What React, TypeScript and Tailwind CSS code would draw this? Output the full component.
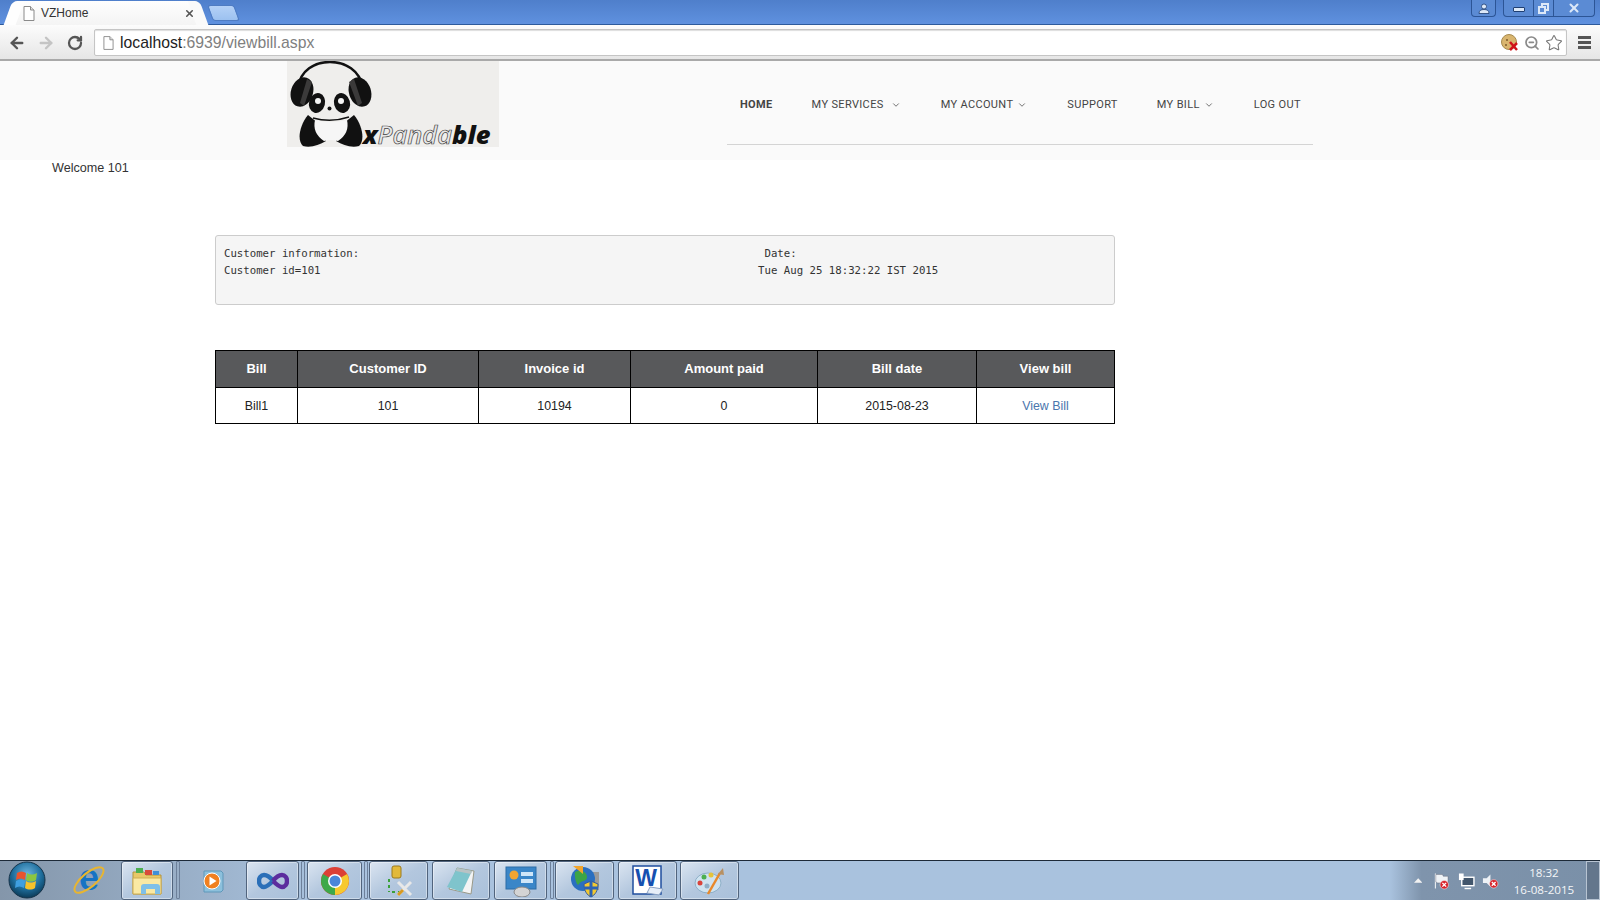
import { ArrowLeft, ArrowRight, ChevronDown, RotateCw, Star, X, ZoomOut } from "lucide-react";
import type { ReactNode } from "react";

const navItems = [
  { label: "HOME", active: true },
  { label: "MY SERVICES", menu: true, wide: true },
  { label: "MY ACCOUNT", menu: true },
  { label: "SUPPORT" },
  { label: "MY BILL", menu: true },
  { label: "LOG OUT" },
];

const columns = [
  { title: "Bill", width: "w-[82px]", value: "Bill1" },
  { title: "Customer ID", width: "w-[181px]", value: "101" },
  { title: "Invoice id", width: "w-[152px]", value: "10194" },
  { title: "Amount paid", width: "w-[187px]", value: "0" },
  { title: "Bill date", width: "w-[159px]", value: "2015-08-23" },
  { title: "View bill", width: "w-[138px]", value: "View Bill" },
];

const infoText =
  "Customer information:".padEnd(84) + "Date:\n" + "Customer id=101".padEnd(83) + "Tue Aug 25 18:32:22 IST 2015\n\n";

function PageIcon({ className }: { className?: string }) {
  return (
    <svg viewBox="0 0 12 15" className={className} fill="#fff" stroke="#8a8a8a">
      <path d="M1 .5h6.5L11 4v10.500H1z" />
      <path d="M7.500.5V4H11" fill="#ddd" />
    </svg>
  );
}

function NotOk({ x, y }: { x: number; y: number }) {
  return (
    <g>
      <circle cx={x} cy={y} r="4.500" fill="#d8232a" stroke="#fff" strokeWidth=".5" />
      <path d={`M${x - 2} ${y - 2}l4 4m0-4l-4 4`} stroke="#fff" strokeWidth="1.500" />
    </g>
  );
}

function PandaLogo() {
  return (
    <svg viewBox="0 0 212 86" className="h-[86px] w-[212px] bg-[#efeeec]">
      <path d="M11 27C13 9 28 1 43 1s30 8 33 26" fill="none" stroke="#111" strokeWidth="2.500" />
      <ellipse cx="15" cy="31" rx="11" ry="15" fill="#111" transform="rotate(18 15 31)" />
      <ellipse cx="73" cy="31" rx="11" ry="15" fill="#111" transform="rotate(-18 73 31)" />
      <path d="M20 18l5 3-8 24-4-3z" fill="#3b3a3a" />
      <path d="M67 18l-5 3 9 24 4-3z" fill="#3b3a3a" />
      <ellipse cx="30" cy="42" rx="8" ry="10" fill="#111" transform="rotate(15 30 42)" />
      <ellipse cx="55" cy="42" rx="8" ry="10" fill="#111" transform="rotate(-15 55 42)" />
      <circle cx="31" cy="40" r="3" fill="#f4f4f4" />
      <circle cx="54" cy="40" r="3" fill="#f4f4f4" />
      <circle cx="42.500" cy="47.500" r="2" fill="#111" />
      <path d="M21 54C12 65 10 80 16 85c8 2 16-1 23-5l-8-18z" fill="#111" />
      <path d="M67 54c9 11 11 26 5 31-8 2-16-1-23-5l8-18z" fill="#111" />
      <path d="M26 57q18 5 36-1" fill="none" stroke="#111" strokeWidth="1.500" />
      <path d="M28 59q16 4 32 0 3 13-9 21-7-2-14 0-12-8-9-21z" fill="#f6f6f6" />
      <text y="83" x="76" fontFamily="'Open Sans', sans-serif" fontStyle="italic" fontWeight="800" fontSize="25.500">
        <tspan fill="#111">x</tspan>
        <tspan fill="#e8e8e8" stroke="#444" strokeWidth=".7" fontWeight="600">Panda</tspan>
        <tspan fill="#111">ble</tspan>
      </text>
    </svg>
  );
}

function BrowserChrome() {
  return (
    <>
      <div className="flex h-[25px] shrink-0 border-b border-[#2d5a9c] bg-gradient-to-b from-[#4f7fcb] to-[#5f91df]">
        <div className="relative ml-[14px] mt-[1px] flex h-[24px] w-[185px] items-center rounded-t-[6px] bg-gradient-to-b from-[#fefefe] to-[#f4f4f4] pl-[9px]">
          <div className="absolute bottom-0 left-[-6px] top-0 w-[12px] -skew-x-[20deg] rounded-tl-[5px] bg-[#fefefe]" />
          <div className="absolute bottom-0 right-[-5px] top-0 w-[12px] skew-x-[20deg] rounded-tr-[5px] bg-[#fafafa]" />
          <PageIcon className="relative h-[15px] w-[12px]" />
          <span className="relative ml-[6px] font-['Liberation_Sans',sans-serif] text-[12px] text-[#333]">VZHome</span>
          <X size={11} strokeWidth={3.5} className="absolute right-[4px] top-[7px] text-[#555]" />
        </div>
        <div className="ml-[11px] mt-[5px] h-[16px] w-[27px] skew-x-[20deg] rounded-[3px] border border-[#4f7cc2] bg-gradient-to-b from-[#b4d1f7] to-[#9cc1f0]" />
        <div className="ml-auto mr-[5px] flex h-[16px] items-start">
          <div className="flex h-[17px] w-[25px] items-center justify-center rounded-b-[4px] border border-t-0 border-[#2c5596] bg-[#5b8bd4]">
            <svg viewBox="0 0 12 11" className="h-[11px] w-[12px]" fill="#dce8f8" stroke="#1f3f72" strokeWidth=".8">
              <circle cx="6" cy="3.500" r="2.500" />
              <path d="M1 10.500c0-3 2-4 5-4s5 1 5 4z" />
            </svg>
          </div>
          <div className="ml-[7px] flex h-[17px] items-center rounded-b-[4px] border border-t-0 border-[#2c5596] bg-[#5b8bd4]">
            <div className="flex h-full w-[30px] items-center justify-center border-r border-[#2c5596] pt-[3px]">
              <div className="h-[5px] w-[12px] rounded-[1px] border border-[#1f3f72] bg-[#dce8f8]" />
            </div>
            <div className="flex h-full w-[20px] items-center justify-center border-r border-[#2c5596]">
              <div className="relative h-[11px] w-[11px]">
                <div className="absolute right-0 top-0 h-[8px] w-[8px] border-2 border-[#dce8f8]" />
                <div className="absolute bottom-0 left-0 h-[8px] w-[8px] border-2 border-[#dce8f8] bg-[#5b8bd4]" />
              </div>
            </div>
            <div className="flex h-full w-[40px] items-center justify-center">
              <X size={14} strokeWidth={3.5} className="text-[#dce8f8]" />
            </div>
          </div>
        </div>
      </div>
      <div className="flex h-[36px] shrink-0 items-center border-b-2 border-[#a9a9a9] bg-gradient-to-b from-[#fcfcfc] to-[#e6e6e6] pt-[1px]">
        <ArrowLeft size={18} strokeWidth={3.2} className="ml-[8px] text-[#555]" />
        <ArrowRight size={18} strokeWidth={3.2} className="ml-[11px] text-[#c4c4c4]" />
        <RotateCw size={16} strokeWidth={3.4} className="ml-[12px] text-[#555]" />
        <div className="ml-[11px] flex h-[27px] w-[1473px] items-center rounded-[2px] border border-[#c5c5c5] bg-white pl-[8px] pr-[3px] shadow-[inset_0_1px_1px_#ddd]">
          <PageIcon className="h-[14px] w-[11px]" />
          <span className="ml-[6px] font-['Liberation_Sans',sans-serif] text-[15.75px] text-[#222]">
            localhost<span className="text-[#808080]">:6939/viewbill.aspx</span>
          </span>
          <svg viewBox="0 0 18 18" className="ml-auto h-[18px] w-[18px]">
            <circle cx="8" cy="8" r="7.500" fill="#d9b56f" stroke="#a68a4f" />
            <circle cx="6" cy="6" r="1" fill="#7b5b2a" />
            <circle cx="5" cy="11" r="1" fill="#7b5b2a" />
            <path d="M9 8l7 8m0-7l-7 7" stroke="#d0131a" strokeWidth="2.500" />
          </svg>
          <ZoomOut size={16} strokeWidth={2.6} className="ml-[5px] text-[#8a8a8a]" />
          <Star size={18} strokeWidth={1.4} className="ml-[5px] text-[#777]" />
        </div>
        <div className="ml-[11px] flex w-[13px] flex-col gap-[2px]">
          <div className="h-[3px] bg-[#555]" />
          <div className="h-[3px] bg-[#555]" />
          <div className="h-[3px] bg-[#555]" />
        </div>
      </div>
    </>
  );
}

function TaskButton({ width, gap, children }: { width: string; gap: string; children: ReactNode }) {
  return (
    <div className={`${width} ${gap} flex h-[39px] items-center justify-center rounded-[3px] border border-[#51647d] bg-gradient-to-br from-[#dbe5f1] via-[#b3c7de] to-[#a9c0da] shadow-[inset_0_0_0_1px_#ffffff66]`}>
      {children}
    </div>
  );
}

function Taskbar() {
  return (
    <div className="flex h-[40px] shrink-0 items-end border-t border-[#1d2a38] bg-gradient-to-r from-[#8496aa] via-[#a9c2de] via-20% to-[#a9c2de] pb-0">
      <svg viewBox="0 0 38 38" className="mb-[1px] ml-[8px] h-[38px] w-[38px]">
        <defs>
          <radialGradient id="orb" cx="50%" cy="35%" r="65%">
            <stop offset="0" stopColor="#6fb6e0" />
            <stop offset=".6" stopColor="#1f6f9e" />
            <stop offset="1" stopColor="#0b3a57" />
          </radialGradient>
        </defs>
        <circle cx="19" cy="19" r="18" fill="url(#orb)" stroke="#16334a" />
        <path d="M9 12c3-2 6-2 9 0l-1 7c-3-2-6-2-9 0z" fill="#e9542d" />
        <path d="M19 12c3 2 6 2 10 0l-1 7c-3 2-7 2-10 0z" fill="#8cc63f" />
        <path d="M8 20c3-2 6-2 9 0l-1 7c-3-2-6-2-9 0z" fill="#3f9fe0" />
        <path d="M18 20c3 2 6 2 10 0l-1 7c-3 2-7 2-10 0z" fill="#f6c22b" />
      </svg>
      <svg viewBox="0 0 34 34" className="mb-[3px] ml-[26px] h-[34px] w-[34px]">
        <text x="17" y="27" textAnchor="middle" fontFamily="'Liberation Sans', sans-serif" fontWeight="700" fontSize="36" fill="#1673c4">e</text>
        <ellipse cx="17" cy="17" rx="18" ry="7" fill="none" stroke="#e8b530" strokeWidth="2" transform="rotate(-40 17 17)" />
      </svg>
      <TaskButton width="w-[52px]" gap="ml-[15px]">
        <svg viewBox="0 0 32 30" className="h-[30px] w-[32px]">
          <path d="M2 6h11l2 3h15v19H2z" fill="#e8c868" stroke="#b4943c" />
          <path d="M5 2h7v5H5z" fill="#4caf50" />
          <path d="M14 4h7v5h-7z" fill="#d94a3a" />
          <path d="M22 5h6v4h-6z" fill="#3f8fd8" />
          <path d="M2 12h28v16H2z" fill="#fae9a4" stroke="#cfae55" />
          <path d="M10 28v-7c0-2 1-3 3-3h13c2 0 3 1 3 3v7h-5v-5H15v5z" fill="#7fc0e8" />
        </svg>
      </TaskButton>
      <div className="mb-[1px] ml-[3px] h-[38px] w-[4px] rounded-[1px] border border-[#6d809a]" />
      <div className="flex h-[39px] w-[66px] items-center justify-center">
        <svg viewBox="0 0 28 28" className="h-[28px] w-[28px]">
          <path d="M5 4h17l2 2v17l-2 2H5z" fill="#8cc0dc" stroke="#5e97b9" />
          <circle cx="13" cy="14" r="8" fill="#f08020" stroke="#fff" />
          <path d="M10.500 9.500l7 4.500-7 4.500z" fill="#fff" />
        </svg>
      </div>
      <TaskButton width="w-[53px]" gap="">
        <svg viewBox="0 0 32 18" className="h-[18px] w-[32px]" fill="none" strokeWidth="4.500">
          <path d="M16 9c-3-4-6-6-9-6-3 0-5 3-5 6s2 6 5 6c3 0 6-3 9-6" stroke="#2a6fb8" />
          <path d="M16 9c3-4 6-6 9-6 3 0 5 3 5 6s-2 6-5 6c-3 0-6-3-9-6" stroke="#5c2d9e" />
        </svg>
      </TaskButton>
      <div className="mb-[1px] ml-[2px] h-[38px] w-[4px] rounded-[1px] border border-[#6d809a]" />
      <TaskButton width="w-[55px]" gap="ml-[2px]">
        <svg viewBox="0 0 30 30" className="h-[30px] w-[30px]">
          <circle cx="15" cy="15" r="14" fill="#dc3f35" />
          <path d="M15 15L27.100 8A14 14 0 0 1 15 29z" fill="#f6c92e" />
          <path d="M15 15L15 29A14 14 0 0 1 2.900 8z" fill="#3da94a" />
          <circle cx="15" cy="15" r="7" fill="#fff" />
          <circle cx="15" cy="15" r="5.500" fill="#4a86d8" />
        </svg>
      </TaskButton>
      <div className="mb-[1px] ml-[2px] h-[38px] w-[4px] rounded-[1px] border border-[#6d809a]" />
      <TaskButton width="w-[59px]" gap="ml-[1px]">
        <svg viewBox="0 0 32 32" className="h-[32px] w-[32px]">
          <rect x="9" y="1" width="9" height="12" rx="2" fill="#e2b93b" stroke="#9c7a1d" />
          <path d="M6 14v3m0 3v3m0 3v1m3 0h3m3 0h2" stroke="#3aa03a" strokeWidth="2" />
          <path d="M15 17l13 13m-13 0l13-13" stroke="#e8e8e8" strokeWidth="3" />
          <path d="M15 30l5-5" stroke="#d89a22" strokeWidth="3" />
        </svg>
      </TaskButton>
      <TaskButton width="w-[58px]" gap="ml-[4px]">
        <svg viewBox="0 0 32 30" className="h-[30px] w-[32px]">
          <path d="M12 2l17 3-3 23L4 23z" fill="#f4f4f4" stroke="#998" />
          <path d="M12 2l15 3-10 21L2 21z" fill="#7fc4cc" />
          <path d="M12 2l15 3-1 3-15-3z" fill="#b9c2c4" />
        </svg>
      </TaskButton>
      <TaskButton width="w-[53px]" gap="ml-[4px]">
        <svg viewBox="0 0 32 32" className="h-[32px] w-[32px]">
          <rect x="1" y="2" width="30" height="22" fill="#3a86c8" stroke="#2c6ca6" />
          <circle cx="9" cy="10" r="4.500" fill="#f3a531" />
          <rect x="16" y="7" width="12" height="4" fill="#cfe6f8" />
          <rect x="16" y="14" width="12" height="4" fill="#cfe6f8" />
          <ellipse cx="17" cy="27" rx="8" ry="5" fill="#d4d4d4" stroke="#888" />
        </svg>
      </TaskButton>
      <div className="mb-[1px] ml-[3px] h-[38px] w-[4px] rounded-[1px] border border-[#6d809a]" />
      <TaskButton width="w-[59px]" gap="ml-[1px]">
        <svg viewBox="0 0 32 34" className="h-[34px] w-[32px]">
          <rect x="17" y="8" width="13" height="18" fill="#9a9a9a" />
          <circle cx="14" cy="15" r="12" fill="#2a6fc0" />
          <path d="M6 8c6-3 12 0 12 5s-6 3-8 7-5-8-4-12z" fill="#3ca447" />
          <path d="M4 2h10v8z" fill="#f2a52c" />
          <path d="M15 20l7-3 7 3c0 7-3 11-7 13-4-2-7-6-7-13z" fill="#f4c92f" stroke="#345a9a" />
          <path d="M22 17v16M15 24h14" stroke="#2d62b4" strokeWidth="3" />
        </svg>
      </TaskButton>
      <TaskButton width="w-[59px]" gap="ml-[4px]">
        <svg viewBox="0 0 32 32" className="h-[32px] w-[32px]">
          <rect x="1" y="1" width="28" height="28" fill="#fff" stroke="#1f4e9e" strokeWidth="1.500" />
          <text x="14" y="21" textAnchor="middle" fontFamily="'Liberation Sans', sans-serif" fontWeight="700" fontSize="23" fill="#1650b0">W</text>
          <path d="M18 22l13 2-4 6-12-2z" fill="#e6eef8" stroke="#8aa2c4" />
        </svg>
      </TaskButton>
      <TaskButton width="w-[59px]" gap="ml-[3px]">
        <svg viewBox="0 0 32 30" className="h-[30px] w-[32px]">
          <ellipse cx="14" cy="17" rx="13" ry="10" fill="#cfe3f0" stroke="#8fb0c8" />
          <circle cx="6" cy="17" r="2.500" fill="#d9443b" />
          <circle cx="10" cy="11" r="2.500" fill="#4caf50" />
          <circle cx="17" cy="9" r="2.500" fill="#e5c33a" />
          <circle cx="13" cy="20" r="2.500" fill="#8fb0c8" />
          <path d="M14 28L26 7" stroke="#e8892b" strokeWidth="2.500" />
          <path d="M24 8l5-6 1 7z" fill="#b89062" />
        </svg>
      </TaskButton>
      <div className="ml-auto flex h-[39px] w-[210px] items-center bg-gradient-to-r from-transparent via-[#7f94ac] via-15% to-[#7a90a8]">
        <svg viewBox="0 0 9 5" className="ml-[24px] h-[5px] w-[9px]" fill="#f2f2f2">
          <path d="M0 5l4.500-5L9 5z" />
        </svg>
        <svg viewBox="0 0 18 18" className="ml-[11px] h-[18px] w-[18px]" fill="#fff">
          <path d="M2 1h1v16H2z" />
          <path d="M3 2h7l1 2h5v7H5l-2-1z" fill="#eef2f6" stroke="#556" strokeWidth=".4" />
          <NotOk x={12} y={13} />
        </svg>
        <svg viewBox="0 0 18 18" className="ml-[8px] h-[18px] w-[18px]">
          <rect x="4" y="5" width="13" height="9" fill="#42566c" stroke="#fff" strokeWidth="1.500" />
          <path d="M7 17h7" stroke="#fff" strokeWidth="1.500" />
          <rect x="1" y="1" width="5" height="7" fill="#fff" />
        </svg>
        <svg viewBox="0 0 18 18" className="ml-[7px] h-[18px] w-[18px]">
          <path d="M1 6h4l4-4v13l-4-4H1z" fill="#eef2f6" />
          <NotOk x={12.500} y={12} />
        </svg>
        <div className="ml-[13px] w-[68px] text-center font-['Open_Sans',sans-serif] text-[11.6px] leading-[17px] text-[#f4f6f8]">
          <div>18:32</div>
          <div className="whitespace-nowrap">16-08-2015</div>
        </div>
        <div className="ml-[10px] h-full w-[15px] border border-[#b8c4d2] bg-[#63768c]" />
      </div>
    </div>
  );
}

export default function App() {
  return (
    <div className="flex h-screen w-full flex-col overflow-hidden bg-white font-['Liberation_Sans',sans-serif]">
      <BrowserChrome />
      <header className="flex h-[99px] shrink-0 items-start bg-[#fafafa]">
        <div className="ml-[287px]">
          <PandaLogo />
        </div>
        <nav className="ml-[228px] flex h-[84px] w-[586px] items-center gap-[39px] whitespace-nowrap border-b border-[#d4d4d4] px-[13px] pt-[5px] font-['Roboto',sans-serif] text-[11px] tracking-[.35px] text-[#444]">
          {navItems.map((item) => (
            <span key={item.label} className={`flex shrink-0 items-center ${item.active ? "font-bold" : ""}`}>
              {item.label}
              {item.menu && <ChevronDown size={10} strokeWidth={1.8} className={item.wide ? "ml-[7px] mr-[1px]" : "ml-[4px] mr-[1px]"} />}
            </span>
          ))}
        </nav>
      </header>
      <main className="flex-1 pt-[1px]">
        <p className="ml-[52px] text-[12.6px] leading-[15px] text-[#333]">Welcome 101</p>
        <pre className="ml-[215px] mt-[59px] h-[70px] w-[900px] rounded-[3px] border border-[#ccc] bg-[#f5f5f5] px-[8px] py-[9px] font-['DejaVu_Sans_Mono',monospace] text-[10.7px] leading-[17px] text-[#333]">
          {infoText}
        </pre>
        <table className="ml-[215px] mt-[45px] table-fixed border-collapse border border-black text-center">
          <thead>
            <tr className="h-[37px] bg-[#58595b] text-[13px] font-bold text-white">
              {columns.map((col) => (
                <th key={col.title} className={`${col.width} border border-black font-bold`}>
                  {col.title}
                </th>
              ))}
            </tr>
          </thead>
          <tbody>
            <tr className="h-[36px] text-[12.4px] text-[#222]">
              {columns.map((col) => (
                <td key={col.title} className={`border border-black pt-[1px] ${col.title === "View bill" ? "text-[#4a76ad]" : ""}`}>
                  {col.value}
                </td>
              ))}
            </tr>
          </tbody>
        </table>
      </main>
      <Taskbar />
    </div>
  );
}
